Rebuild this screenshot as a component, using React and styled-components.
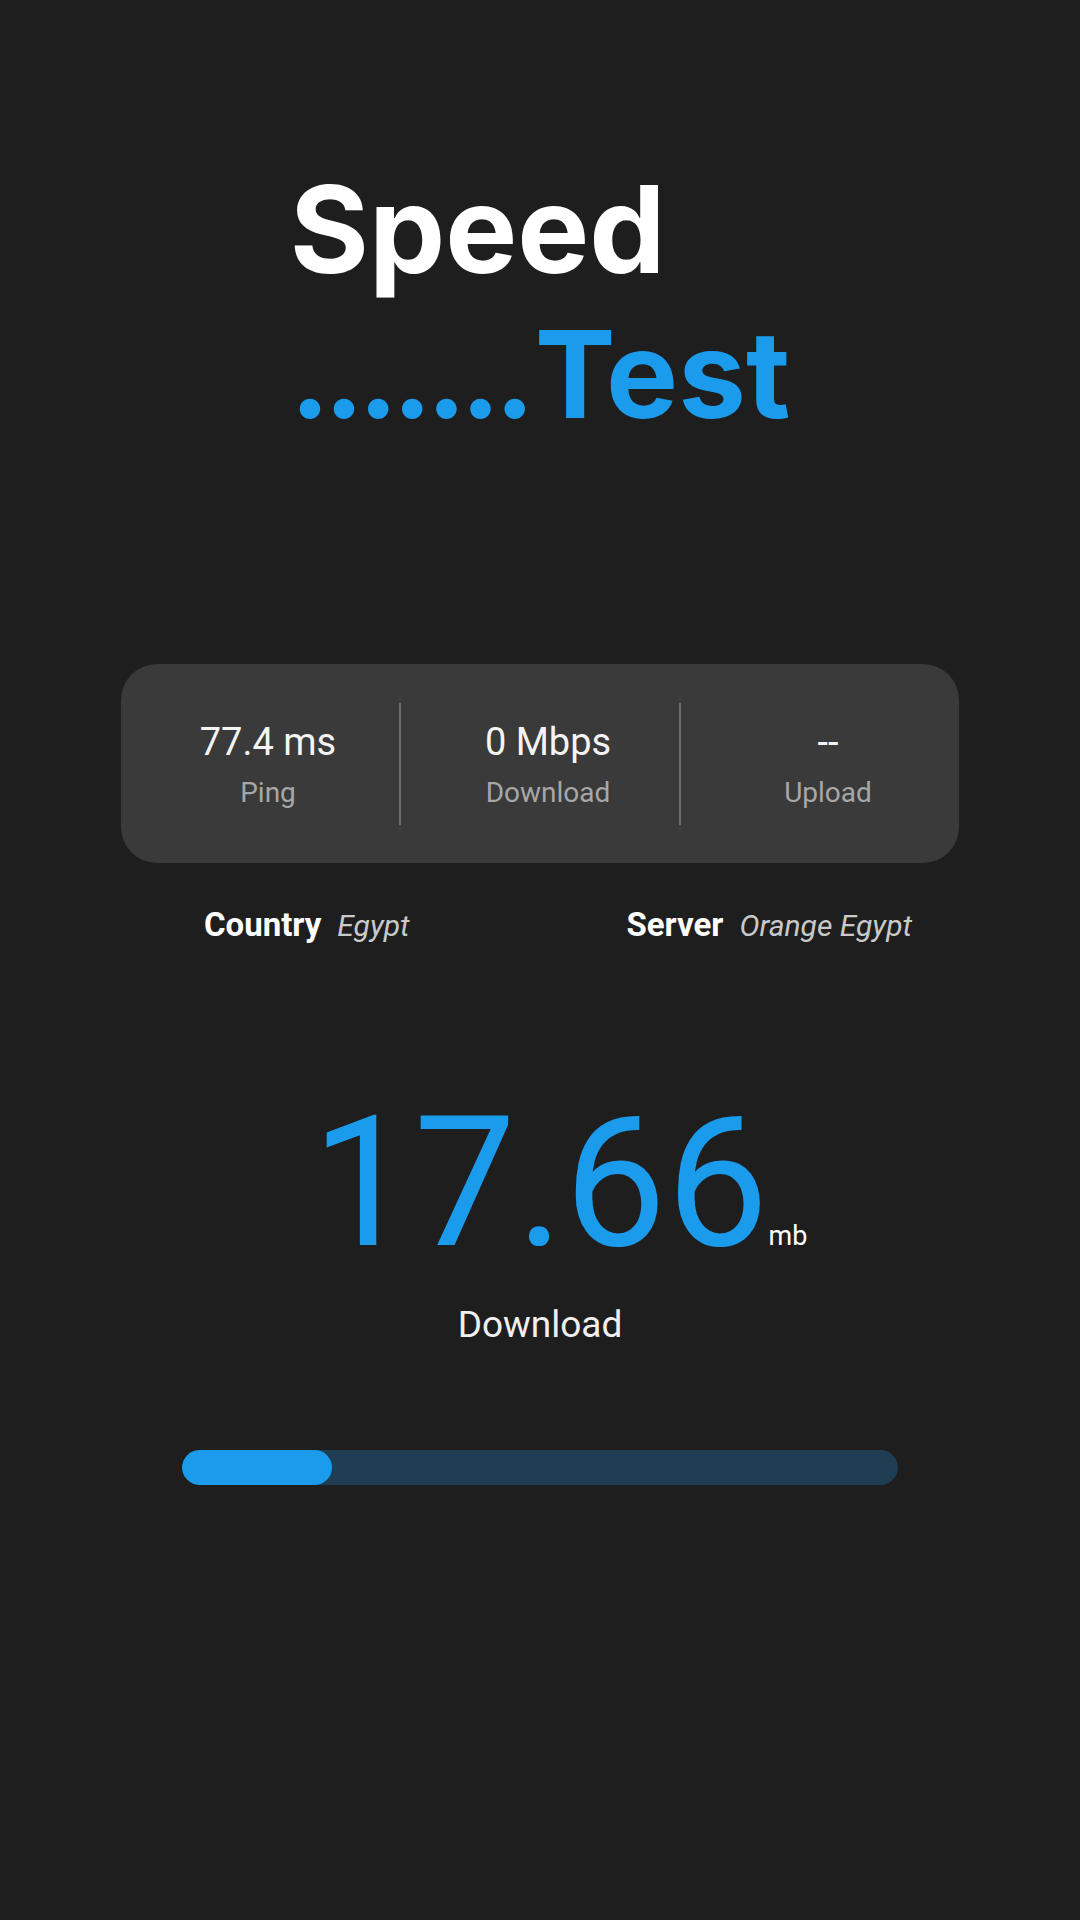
import React from "react";
import styled, { createGlobalStyle } from "styled-components";

const Global = createGlobalStyle`
  html, body { margin: 0; padding: 0; background: #1e1e1e; }
  body { font-family: Roboto, "Noto Sans", sans-serif; color: #fff; }
`;

const Page = styled.main`
  min-height: 1920px;
  background: #1e1e1e;
  display: flex;
  flex-direction: column;
  align-items: center;
  padding-top: 157px;
  box-sizing: border-box;
`;

const TitleBlock = styled.h1`
  margin: 0;
  font-family: Inter, "Liberation Sans", sans-serif;
  font-weight: 700;
  font-size: 121px;
  line-height: 145px;
  letter-spacing: 0;
  text-align: left;
  display: flex;
  flex-direction: column;
`;

const TitleLine = styled.span`
  display: block;
  white-space: nowrap;
  color: ${(p) => (p.$accent ? "#1b9bec" : "#ffffff")};
`;

const Dots = styled.span`
  letter-spacing: -6.3px;
  margin-right: 6.3px;
`;

const StatsCard = styled.section`
  margin-top: 217px;
  width: 838px;
  height: 199px;
  box-sizing: border-box;
  padding: 39px 0;
  background: #3a3a3a;
  border-radius: 36px;
  display: flex;
`;

const Stat = styled.div`
  flex: 1;
  height: 122px;
  box-sizing: border-box;
  padding-left: 16px;
  display: flex;
  flex-direction: column;
  align-items: center;
  justify-content: center;
  gap: 12px;
  border-left: ${(p) => (p.$divider ? "2px solid #6e6e6e" : "none")};
`;

const StatValue = styled.div`
  font-size: 38px;
  line-height: 44px;
  font-weight: 400;
  color: #f4f4f4;
`;

const StatLabel = styled.div`
  font-size: 28px;
  line-height: 33px;
  color: #a7a7a7;
`;

const InfoRow = styled.div`
  margin-top: 42px;
  width: 1080px;
  box-sizing: border-box;
  padding: 0 168px 0 204px;
  display: flex;
  justify-content: space-between;
  align-items: baseline;
  line-height: 40px;
`;

const InfoItem = styled.div`
  display: flex;
  align-items: baseline;
  gap: 16px;
`;

const InfoKey = styled.span`
  font-size: 33px;
  font-weight: 700;
  color: #ffffff;
`;

const InfoValue = styled.span`
  font-size: 30px;
  font-style: italic;
  color: #c9c9c9;
`;

const Reading = styled.div`
  margin-top: 145px;
  width: 1080px;
  display: grid;
  grid-template-columns: 1fr auto 1fr;
  align-items: baseline;
`;

const BigNumber = styled.span`
  grid-column: 2;
  font-size: 182px;
  line-height: 183px;
  font-weight: 400;
  color: #1b9bec;
`;

const Unit = styled.span`
  grid-column: 3;
  justify-self: start;
  font-size: 27px;
  line-height: 27px;
  color: #ffffff;
`;

const ReadingLabel = styled.div`
  margin-top: 29px;
  font-size: 37px;
  line-height: 44px;
  color: #f0f0f0;
`;

const Track = styled.div`
  margin-top: 103px;
  width: 716px;
  height: 35px;
  border-radius: 18px;
  background: #1f3d53;
  overflow: hidden;
`;

const Fill = styled.div`
  height: 100%;
  border-radius: 18px;
  background: #1b9bec;
`;

const stats = [
  { value: "77.4 ms", label: "Ping" },
  { value: "0 Mbps", label: "Download" },
  { value: "--", label: "Upload" },
];

export default function App() {
  const progress = 0.21;
  return (
    <>
      <Global />
      <Page>
        <TitleBlock>
          <TitleLine>Speed</TitleLine>
          <TitleLine $accent>
            <Dots>.......</Dots>Test
          </TitleLine>
        </TitleBlock>

        <StatsCard>
          {stats.map((s, i) => (
            <Stat key={s.label} $divider={i > 0}>
              <StatValue>{s.value}</StatValue>
              <StatLabel>{s.label}</StatLabel>
            </Stat>
          ))}
        </StatsCard>

        <InfoRow>
          <InfoItem>
            <InfoKey>Country</InfoKey>
            <InfoValue>Egypt</InfoValue>
          </InfoItem>
          <InfoItem>
            <InfoKey>Server</InfoKey>
            <InfoValue>Orange Egypt</InfoValue>
          </InfoItem>
        </InfoRow>

        <Reading>
          <BigNumber>17.66</BigNumber>
          <Unit>mb</Unit>
        </Reading>
        <ReadingLabel>Download</ReadingLabel>

        <Track>
          <Fill style={{ width: `${progress * 100}%` }} />
        </Track>
      </Page>
    </>
  );
}
